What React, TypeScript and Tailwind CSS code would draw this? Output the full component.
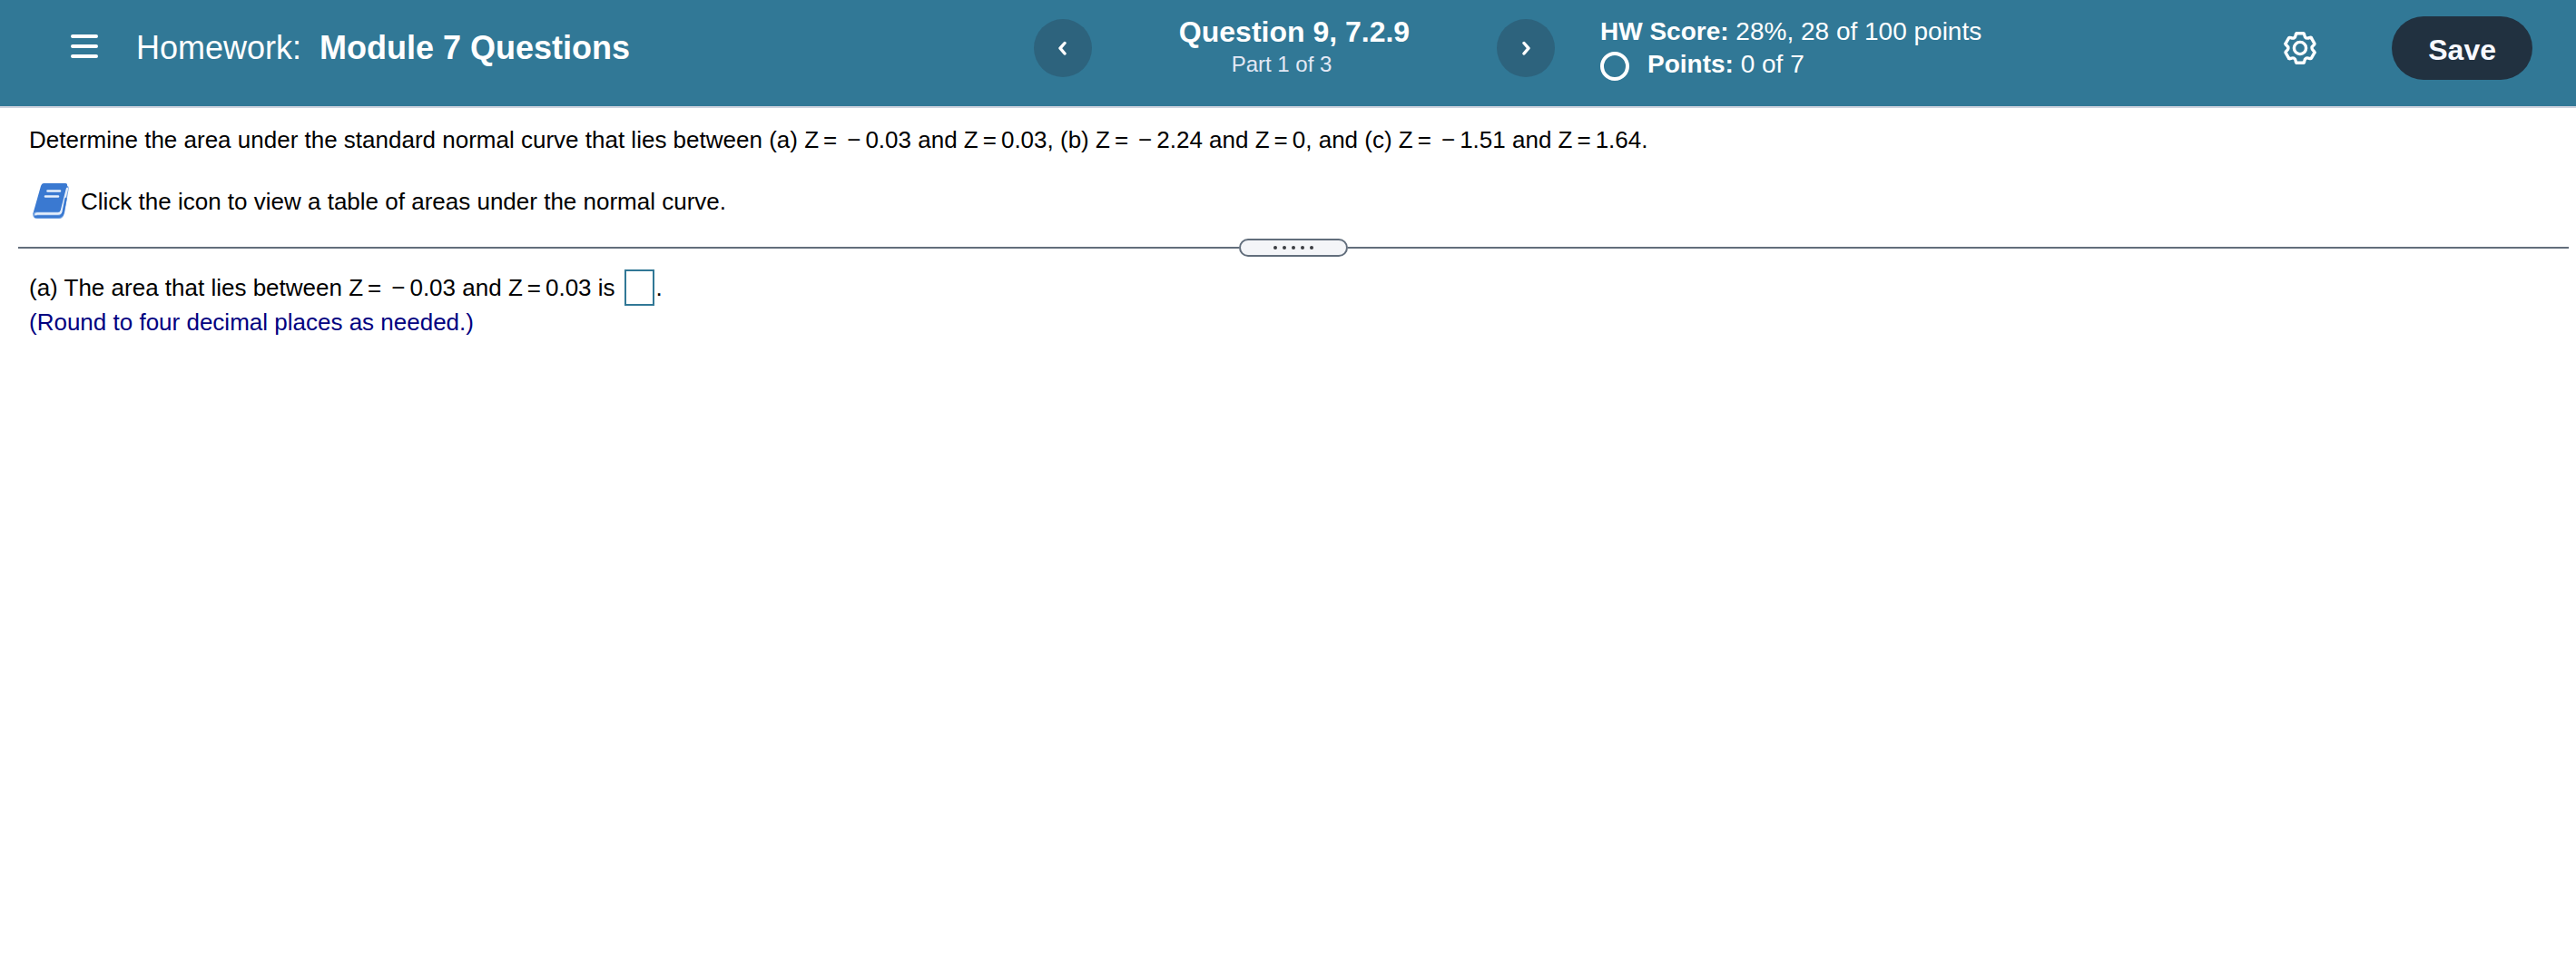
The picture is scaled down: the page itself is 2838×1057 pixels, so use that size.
import type { ReactNode } from "react";

type RelationProps = {
  readonly value: string;
  readonly negative?: boolean;
};

const GEAR_ANGLES = [0, 60, 120, 180, 240, 300];
const HANDLE_DOTS = [1, 2, 3, 4, 5];

function MenuIcon() {
  return (
    <svg width="30" height="26" viewBox="0 0 30 26" aria-hidden="true">
      <path
        d="M2 2h26M2 13h26M2 24h26"
        stroke="currentColor"
        strokeWidth="4"
        strokeLinecap="round"
      />
    </svg>
  );
}

function ChevronIcon({ direction }: { readonly direction: "left" | "right" }) {
  return (
    <svg width="12" height="16" viewBox="0 0 12 16" fill="none" aria-hidden="true">
      <path
        d={direction === "left" ? "M8 2.5 3 8.2 8 14" : "M4 2.5 9 8.2 4 14"}
        stroke="currentColor"
        strokeWidth="3.4"
        strokeLinecap="round"
        strokeLinejoin="round"
      />
    </svg>
  );
}

function GearIcon() {
  return (
    <svg width="36" height="36" viewBox="-18 -18 36 36" fill="none" aria-hidden="true">
      <g stroke="currentColor" strokeWidth="3.4" strokeLinecap="round">
        {GEAR_ANGLES.map((angle) => (
          <path
            key={angle}
            transform={`rotate(${angle})`}
            d="M-3.4-16.3H3.4C5.6-16.3 3.8-12.6 6.5-11.3C9.2-9.6 11.3-13.1 12.42-11.1"
          />
        ))}
        <circle r="6.6" />
      </g>
    </svg>
  );
}

function BookIcon() {
  return (
    <svg width="40" height="40" viewBox="0 0 40 40" fill="none" aria-hidden="true">
      <path
        d="M37 2Q40 3 39.7 6L35 33Q33.5 39 29 39H5Q0 39 0 33Z"
        fill="#6f9fe0"
      />
      <path
        d="M12 0H36Q38.5 0 38 3L31.5 29Q30.8 31.5 28 31.5H4Q1 31.5 0.5 33L9 3Q10 0 12 0Z"
        fill="#3a79d1"
      />
      <path
        d="M38 6 31.8 30.5Q30.8 33.5 28 33.5H5Q3.5 33.5 3.5 34.5"
        stroke="#e6effb"
        strokeWidth="2.4"
        strokeLinecap="round"
      />
      <path
        d="M3 36.8H28Q32.5 36.8 33.6 32L36.5 17"
        stroke="#3a79d1"
        strokeWidth="2.4"
        strokeLinecap="round"
      />
      <path
        d="M16.5 8.5H30M14 14.5H28"
        stroke="#e6effb"
        strokeWidth="2.6"
        strokeLinecap="round"
      />
    </svg>
  );
}

function Relation({ value, negative = false }: RelationProps) {
  return (
    <span className="whitespace-nowrap">
      Z<span className="mx-[5px]">=</span>
      {negative && <span className="mr-[5px] ml-1.5">−</span>}
      {value}
    </span>
  );
}

function NavButton({
  label,
  children,
}: {
  readonly label: string;
  readonly children: ReactNode;
}) {
  return (
    <button
      type="button"
      aria-label={label}
      className="flex size-16 items-center justify-center rounded-full bg-[#2d637d]"
    >
      {children}
    </button>
  );
}

function Header() {
  return (
    <header className="grid grid-cols-[1fr_auto_1fr] items-center border-b-2 border-[#cdd2dd] bg-[#317896] pt-[17px] pr-12 pb-7 pl-[62px] text-white">
      <div className="flex items-center gap-[26px]">
        <button type="button" aria-label="Menu" className="px-4 pb-1">
          <MenuIcon />
        </button>
        <h1 className="flex gap-5 text-[36px] leading-10">
          <span>Homework:</span>
          <strong className="font-bold">Module 7 Questions</strong>
        </h1>
      </div>

      <nav className="flex items-center" aria-label="Questions">
        <NavButton label="Previous question">
          <ChevronIcon direction="left" />
        </NavButton>
        <div className="w-[446px] text-center">
          <h2 className="text-[32px] leading-9 font-bold">Question 9, 7.2.9</h2>
          <p className="pr-7 text-[24px] leading-9 text-[#e3e8f5]">Part 1 of 3</p>
        </div>
        <NavButton label="Next question">
          <ChevronIcon direction="right" />
        </NavButton>
      </nav>

      <div className="flex items-center pl-[50px]">
        <div className="text-[28px] leading-9">
          <p>
            <strong className="font-bold">HW Score:</strong> 28%, 28 of 100 points
          </p>
          <div className="flex h-9 gap-5">
            <span className="mt-1 size-8 rounded-full border-4 border-white" />
            <p>
              <strong className="font-bold">Points:</strong> 0 of 7
            </p>
          </div>
        </div>
        <button type="button" aria-label="Settings" className="mr-[83px] ml-auto">
          <GearIcon />
        </button>
        <button
          type="button"
          className="h-[70px] rounded-full bg-[#213140] px-10 pt-1 text-[32px] leading-9 font-bold text-[#f8f9ff]"
        >
          Save
        </button>
      </div>
    </header>
  );
}

function Divider() {
  return (
    <div className="mt-[21px] mr-2 ml-5 flex items-center">
      <span className="h-0.5 flex-1 bg-[#626e7c]" />
      <button
        type="button"
        aria-label="Resize panels"
        className="flex h-5 w-[120px] items-center justify-center gap-1.5 rounded-full border-2 border-[#626e7c] bg-[#f4f5f8]"
      >
        {HANDLE_DOTS.map((dot) => (
          <span key={dot} className="size-1 rounded-full bg-[#3a3d42]" />
        ))}
      </button>
      <span className="h-0.5 flex-1 bg-[#626e7c]" />
    </div>
  );
}

export default function App() {
  return (
    <div className="min-h-screen bg-white font-['Liberation_Sans',Arial,sans-serif] text-black">
      <Header />
      <main className="pt-4 text-[26px] leading-[38px]">
        <section className="px-8">
          <p>
            Determine the area under the standard normal curve that lies between (a){" "}
            <Relation value="0.03" negative /> and <Relation value="0.03" />, (b){" "}
            <Relation value="2.24" negative /> and <Relation value="0" />, and (c){" "}
            <Relation value="1.51" negative /> and <Relation value="1.64" />.
          </p>
          <div className="mt-[29px] flex items-center gap-[13px] pl-1">
            <button type="button" aria-label="View table of areas">
              <BookIcon />
            </button>
            <p>Click the icon to view a table of areas under the normal curve.</p>
          </div>
        </section>

        <Divider />

        <section className="mt-[14px] px-8">
          <div className="flex items-center">
            <label htmlFor="answer">
              (a) The area that lies between <Relation value="0.03" negative /> and{" "}
              <Relation value="0.03" /> is
            </label>
            <input
              id="answer"
              type="text"
              className="mr-0.5 ml-2.5 h-10 w-[33px] border-2 border-[#317896] bg-white text-center outline-none"
            />
            <span>.</span>
          </div>
          <p className="leading-9 text-[#000080]">
            (Round to four decimal places as needed.)
          </p>
        </section>
      </main>
    </div>
  );
}
